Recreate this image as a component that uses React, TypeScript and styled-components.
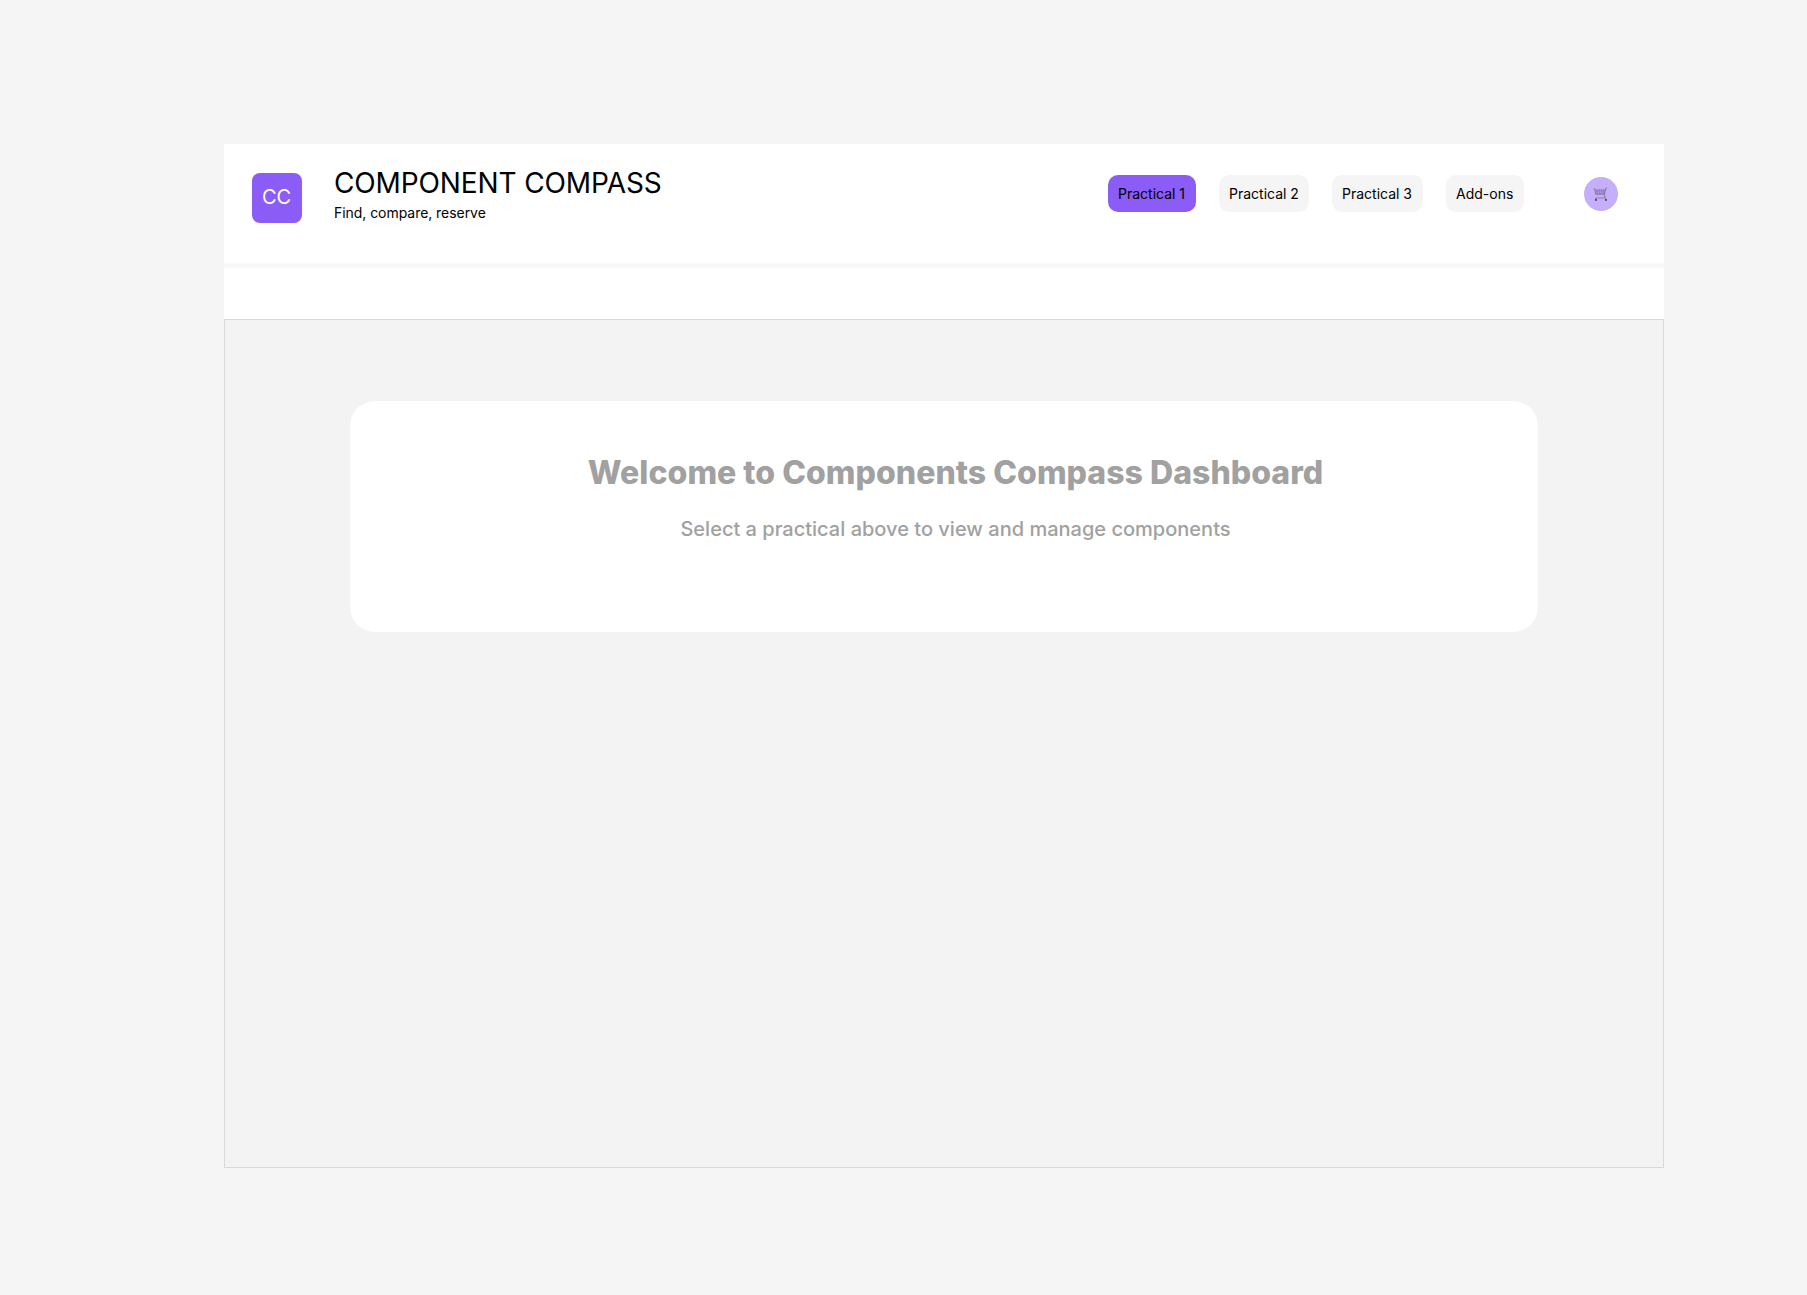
import React from "react";
import styled, { createGlobalStyle } from "styled-components";

const GlobalStyle = createGlobalStyle`
  * { box-sizing: border-box; }
  body {
    margin: 0;
    background: #f5f5f5;
    font-family: Inter, "Liberation Sans", sans-serif;
    color: #000;
  }
  h1, h2, p { margin: 0; font-weight: 400; white-space: nowrap; }
`;

const Page = styled.div`
  height: 1295px;
  padding: 144px 143px 127px 224px;
`;

const Frame = styled.main`
  display: flex;
  flex-direction: column;
  width: 1440px;
  height: 1024px;
  background: #fff;
`;

const Header = styled.header`
  display: flex;
  align-items: flex-start;
  height: 117px;
  padding: 0 46px 0 28px;
`;

const Logo = styled.div`
  display: flex;
  align-items: center;
  justify-content: center;
  width: 50px;
  height: 50px;
  margin-top: 28.5px;
  padding: 0 1px 1px 0;
  border-radius: 8px;
  background: #8b5cf6;
  color: #fff;
  font-size: 20px;
  font-weight: 400;
`;

const Brand = styled.div`
  margin: 20px auto 0 32px;
`;

const Title = styled.h1`
  font-size: 28px;
  line-height: 39px;
  letter-spacing: -0.12px;
`;

const Tagline = styled.p`
  font-size: 14px;
  line-height: 20px;
  letter-spacing: -0.05px;
`;

const Nav = styled.nav`
  display: flex;
  gap: 23px;
  margin: 31px 60px 0 0;
`;

const NavButton = styled.button<{ $active?: boolean; $width: number }>`
  width: ${(p) => p.$width}px;
  height: 37px;
  padding: 0 0 0 10px;
  border: 0;
  border-radius: 10px;
  background: ${(p) => (p.$active ? "#8b5cf6" : "#f5f5f5")};
  color: #000;
  font: 400 14px Inter, sans-serif;
  text-align: left;
  white-space: nowrap;
`;

const CartButton = styled.button`
  display: flex;
  align-items: center;
  justify-content: center;
  width: 34px;
  height: 34px;
  margin-top: 32.5px;
  padding: 1px 1px 0 0;
  border: 0;
  border-radius: 50%;
  background: #c5aefa;
`;

const Divider = styled.div`
  height: 8px;
  background: linear-gradient(#fcfcfc 0, #fcfcfc 2px, #f6f6f6 4px, #f6f6f6 5px, #fbfbfb 7px, #fff 8px);
`;

const Content = styled.section`
  flex: 1;
  margin-top: 50px;
  padding: 81px 125px 0;
  border: 1px solid #d9d9d9;
  background: #f3f3f3;
`;

const WelcomeCard = styled.div`
  display: flex;
  flex-direction: column;
  align-items: center;
  height: 231px;
  padding: 52px 0 0 23px;
  border-radius: 25px;
  background: #fff;
  color: #a1a1a1;
`;

const WelcomeTitle = styled.h2`
  font-size: 32px;
  font-weight: 800;
  line-height: 40px;
  letter-spacing: 0.03px;
`;

const WelcomeText = styled.p`
  margin-top: 22px;
  font-size: 20px;
  font-weight: 500;
  line-height: 28px;
  letter-spacing: 0.01px;
`;

const CartIcon = () => (
  <svg width="15" height="15" viewBox="0 0 15 15" fill="none">
    <path d="M1.2 2 2.4 7.2h8.9L12.7 2Z" fill="#8d7cab" fillOpacity=".35" />
    <path d="M.6 1.8h1.2l.9 5.6h8.6" stroke="#6f6286" strokeWidth=".6" />
    <path d="M2 3.2h10.5M2.2 4.7h10M2.5 6.2h9.4M4.2 2v5.3M6.4 2v5.3M8.6 2v5.3M10.6 2v5.3" stroke="#766790" strokeWidth=".3" />
    <path d="M14 .9h-1L11.3 7.4l.9 3.6" stroke="#6f6286" strokeWidth=".7" />
    <path d="M12.6 11H2.6v.8" stroke="#75688d" strokeWidth=".7" />
    <circle cx="3" cy="12.9" r="1.1" fill="#554a63" />
    <circle cx="12.9" cy="12.9" r="1.1" fill="#554a63" />
  </svg>
);

const tabs = [
  { label: "Practical 1", width: 88, active: true },
  { label: "Practical 2", width: 90 },
  { label: "Practical 3", width: 91 },
  { label: "Add-ons", width: 78 },
];

export default function App() {
  return (
    <>
      <GlobalStyle />
      <Page>
        <Frame>
          <Header>
            <Logo>CC</Logo>
            <Brand>
              <Title>COMPONENT COMPASS</Title>
              <Tagline>Find, compare, reserve</Tagline>
            </Brand>
            <Nav>
              {tabs.map((t) => (
                <NavButton key={t.label} $active={t.active} $width={t.width}>
                  {t.label}
                </NavButton>
              ))}
            </Nav>
            <CartButton aria-label="Cart">
              <CartIcon />
            </CartButton>
          </Header>
          <Divider />
          <Content>
            <WelcomeCard>
              <WelcomeTitle>Welcome to Components Compass Dashboard</WelcomeTitle>
              <WelcomeText>Select a practical above to view and manage components</WelcomeText>
            </WelcomeCard>
          </Content>
        </Frame>
      </Page>
    </>
  );
}
